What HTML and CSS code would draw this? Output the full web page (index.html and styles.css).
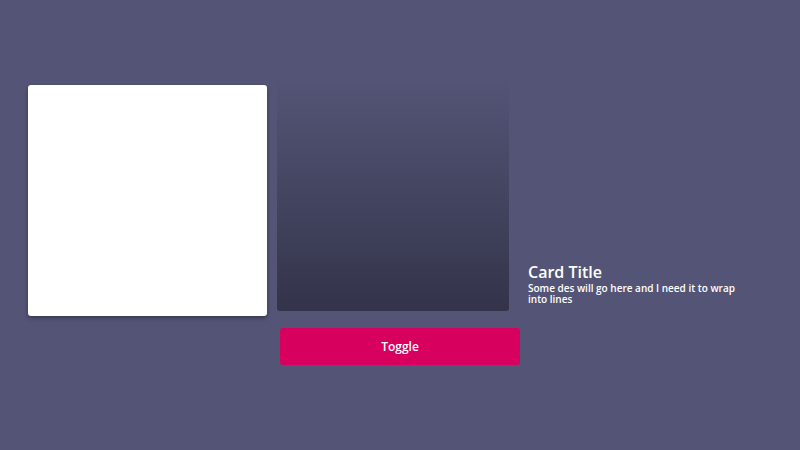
FILE: index.html
```html
<!DOCTYPE html>
<html>
<head>
<meta charset="utf-8">
<link rel="stylesheet" href="styles.css">
</head>
<body>
<div class="stage">
  <div class="white-card"></div>
  <div class="middle">
    <div class="gradient-card"></div>
    <button class="toggle">Toggle</button>
  </div>
  <div class="text-card">
    <div class="title">Card Title</div>
    <div class="desc">Some des will go here and I need it to wrap into lines</div>
  </div>
</div>
</body>
</html>
```
FILE: styles.css
```css
html, body {
  margin: 0;
  padding: 0;
  width: 800px;
  height: 450px;
  background: #545576;
  overflow: hidden;
  font-family: "Open Sans", "DejaVu Sans", sans-serif;
}
.stage {
  display: flex;
  align-items: flex-start;
  padding: 79px 0 0 28px;
}
.white-card {
  width: 239px;
  height: 231px;
  margin-top: 6px;
  background: #ffffff;
  border-radius: 3px;
  box-shadow: 0 2px 4px rgba(0, 0, 0, 0.35);
}
.middle {
  margin-left: 10px;
  display: flex;
  flex-direction: column;
}
.gradient-card {
  width: 232px;
  height: 232px;
  border-radius: 0 0 3px 3px;
  background: linear-gradient(to bottom, rgba(51, 52, 74, 0) 0%, #33344a 100%);
}
.toggle {
  margin: 17px 0 0 3px;
  width: 240px;
  height: 37px;
  border: none;
  border-radius: 3px;
  background: #d7005f;
  color: #ffffff;
  font-family: "Open Sans", "DejaVu Sans", sans-serif;
  font-size: 12px;
  font-weight: 600;
  padding: 0;
}
.text-card {
  margin: 183px 0 0 8px;
  width: 225px;
  color: #ffffff;
}
.title {
  font-size: 16px;
  font-weight: 600;
  line-height: 21px;
}
.desc {
  font-size: 10px;
  font-weight: 600;
  line-height: 11px;
}
```
